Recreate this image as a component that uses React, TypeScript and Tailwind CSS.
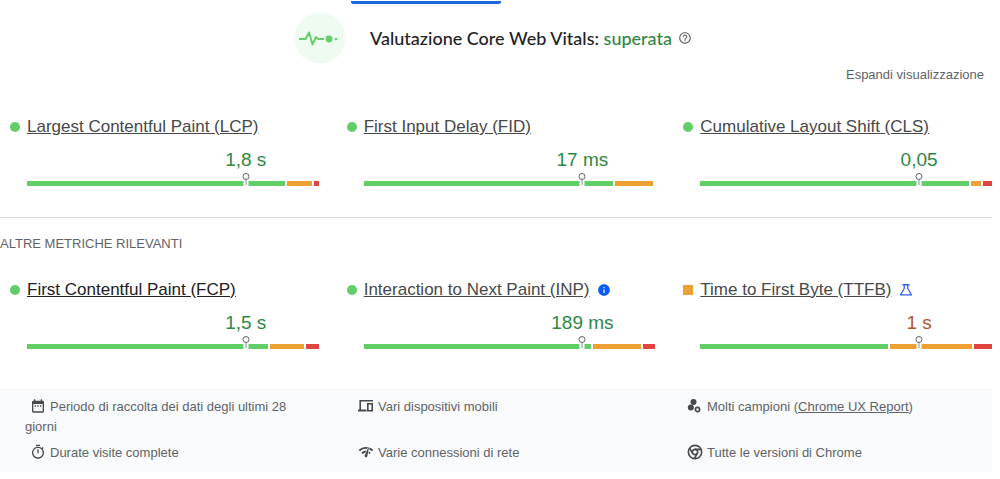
import type { ReactNode } from "react";
import {
  MdDateRange,
  MdHelpOutline,
  MdInfo,
  MdNetworkCheck,
  MdOutlineTimer,
} from "react-icons/md";

type Rating = "good" | "average";

interface Metric {
  name: string;
  value: string;
  rating: Rating;
  // Share of page loads rated good, average and poor.
  shares: [number, number, number];
  active?: boolean;
  extra?: ReactNode;
}

function FlaskIcon() {
  return (
    <svg viewBox="0 0 24 24" className="size-3.5" fill="none" stroke="#2f62f0" strokeWidth="2.2" role="img" aria-label="Sperimentale">
      <path d="M6 3h12M9 3v6.5L2.5 20.5h19L15 9.5V3" strokeLinejoin="round" />
    </svg>
  );
}

function DevicesIcon() {
  return (
    <svg viewBox="0 0 16 16" className="size-4" fill="none" stroke="#46494d" aria-hidden="true">
      <path d="M15 2.8H2.2V12" strokeWidth="1.6" />
      <path d="M0 12.5h8.5" strokeWidth="2" />
      <path d="M9.8 5.8h4.4v7H9.8z" strokeWidth="1.6" />
    </svg>
  );
}

function SamplesIcon() {
  return (
    <svg viewBox="0 0 16 16" className="size-4" aria-hidden="true">
      <circle cx="6.5" cy="4" r="3" fill="#46494d" />
      <circle cx="3.8" cy="9.5" r="3" fill="#46494d" />
      <circle cx="10.5" cy="11.5" r="2.1" fill="none" stroke="#46494d" strokeWidth="1.7" />
    </svg>
  );
}

function ChromeIcon() {
  return (
    <svg viewBox="0 0 24 24" className="size-4" fill="none" stroke="#46494d" strokeWidth="2.4" aria-hidden="true">
      <circle cx="12" cy="12" r="10" />
      <circle cx="12" cy="12" r="4" />
      <path d="M21.2 8H12M3.95 6.06 8.54 14M10.88 21.94 15.46 14" />
    </svg>
  );
}

function PulseIcon() {
  return (
    <svg viewBox="0 0 52 52" className="size-[52px]" aria-hidden="true">
      <circle cx="26" cy="26" r="25.5" fill="#effaf1" />
      <path d="M5 27h6.5l3.5-6.5 3.5 12 3.5-7.5 2 2h6" fill="none" stroke="#62d06a" strokeWidth="2" strokeLinejoin="round" />
      <circle cx="35" cy="27" r="3.4" fill="#62d06a" />
      <circle cx="42" cy="27" r="1.3" fill="#62d06a" />
    </svg>
  );
}

const vitals: Metric[] = [
  { name: "Largest Contentful Paint (LCP)", value: "1,8 s", rating: "good", shares: [258, 25, 5] },
  { name: "First Input Delay (FID)", value: "17 ms", rating: "good", shares: [250, 38, 0] },
  { name: "Cumulative Layout Shift (CLS)", value: "0,05", rating: "good", shares: [269, 10, 9] },
];

const others: Metric[] = [
  { name: "First Contentful Paint (FCP)", value: "1,5 s", rating: "good", shares: [241, 34, 13], active: true },
  {
    name: "Interaction to Next Paint (INP)",
    value: "189 ms",
    rating: "good",
    shares: [228, 48, 12],
    extra: <MdInfo className="size-3.5 text-[#0b5cf5]" role="img" aria-label="Informazioni" />,
  },
  { name: "Time to First Byte (TTFB)", value: "1 s", rating: "average", shares: [187, 82, 18], extra: <FlaskIcon /> },
];

const segmentColors = ["bg-[#62ce68]", "bg-[#eea133]", "bg-[#e2433e]"];

function MetricCard({ metric }: { metric: Metric }) {
  const good = metric.rating === "good";
  return (
    <article className="grid grid-cols-[10px_1fr] gap-x-[7px]">
      <span className={good ? "size-2.5 self-center rounded-full bg-[#62ce68]" : "size-2.5 self-center bg-[#eea133]"} />
      <h3 className="flex items-center gap-2 text-[17px] leading-6 whitespace-nowrap">
        <a href="#" className={metric.active ? "text-[#202124] underline" : "text-[#46484b] underline"}>
          {metric.name}
        </a>
        {metric.extra}
      </h3>
      <div className="col-start-2 mt-[9px]">
        <p className={good ? "ml-auto w-1/2 text-center text-[19px] leading-6 text-[#2e8746]" : "ml-auto w-1/2 text-center text-[19px] leading-6 text-[#b3532a]"}>
          {metric.value}
        </p>
        <div className="relative mt-[9px] flex h-[5px] gap-0.5">
          {metric.shares.map((share, i) => (
            <span key={i} className={segmentColors[i]} style={{ flex: `${share} 0 0` }} />
          ))}
          <span className="absolute -top-2 left-3/4 flex w-[5px] -translate-x-1/2 flex-col items-center">
            <span className="size-[7px] shrink-0 rounded-full border border-[#5f6368] bg-white" />
            <span className="flex h-1.5 w-[5px] justify-center bg-white">
              <span className="h-[5px] w-px bg-[#8a8d91]" />
            </span>
          </span>
        </div>
      </div>
    </article>
  );
}

function MetricRow({ metrics }: { metrics: Metric[] }) {
  return (
    <div className="grid grid-cols-3 gap-x-7 pl-2.5">
      {metrics.map((metric) => (
        <MetricCard key={metric.name} metric={metric} />
      ))}
    </div>
  );
}

function Note({ icon, children }: { icon: ReactNode; children: ReactNode }) {
  return (
    <li>
      <span className="mr-1 inline-block align-[-3px] text-[#46494d]">{icon}</span>
      {children}
    </li>
  );
}

export default function App() {
  return (
    <main className="min-h-screen bg-white pt-px pr-2 font-['Liberation_Sans',Arial,sans-serif] text-[#5f6368]">
      <div className="flex justify-center pr-[140px]">
        <span className="h-[3px] w-[150px] rounded-b-xs bg-[#1b68d8]" />
      </div>
      <header className="mt-2 flex h-[52px] items-center justify-center pr-1.5">
        <PulseIcon />
        <h1 className="ml-6 font-['Lato','Open_Sans',sans-serif] text-[18px] leading-6 font-medium text-[#202124]">
          Valutazione Core Web Vitals: <span className="text-[#2e8746]">superata</span>
        </h1>
        <button type="button" aria-label="Ulteriori informazioni" className="ml-1.5">
          <MdHelpOutline className="size-3.5" />
        </button>
      </header>
      <div className="mt-px flex justify-end pr-2">
        <button type="button" className="text-[13px] leading-5">Espandi visualizzazione</button>
      </div>
      <section aria-label="Core Web Vitals" className="mt-[30px]">
        <MetricRow metrics={vitals} />
      </section>
      <section className="mt-[31px] border-t border-[#d9dbde] pt-4">
        <h2 className="text-[13px] leading-5">ALTRE METRICHE RILEVANTI</h2>
        <div className="mt-6">
          <MetricRow metrics={others} />
        </div>
      </section>
      <footer className="mt-[39px] bg-[#f8fafb] pt-[9px] pb-[9px] text-[13px] leading-5">
        <ul className="grid grid-cols-[280fr_276fr_305fr] gap-x-[53px] gap-y-1.5 pl-[25px]">
          <Note icon={<MdDateRange className="ml-[5px] size-4" />}>Periodo di raccolta dei dati degli ultimi 28 giorni</Note>
          <Note icon={<DevicesIcon />}>Vari dispositivi mobili</Note>
          <Note icon={<SamplesIcon />}>
            Molti campioni (<a href="#" className="underline">Chrome UX Report</a>)
          </Note>
          <Note icon={<MdOutlineTimer className="ml-[5px] size-4" />}>Durate visite complete</Note>
          <Note icon={<MdNetworkCheck className="size-4" />}>Varie connessioni di rete</Note>
          <Note icon={<ChromeIcon />}>Tutte le versioni di Chrome</Note>
        </ul>
      </footer>
    </main>
  );
}
